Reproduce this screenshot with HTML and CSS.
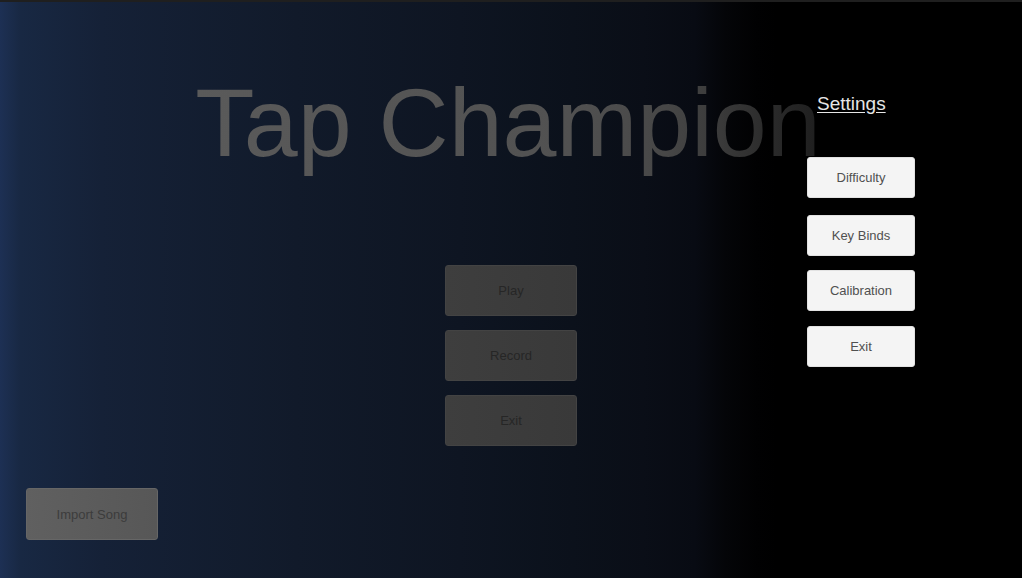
FILE: index.html
```html
<!DOCTYPE html>
<html lang="en">
<head>
<meta charset="utf-8">
<title>Tap Champion</title>
<link rel="stylesheet" href="styles.css">
</head>
<body>
<div class="screen">
  <header class="title-wrap">
    <h1 class="title">Tap Champion</h1>
  </header>
  <nav class="main-menu">
    <button class="btn btn-main">Play</button>
    <button class="btn btn-main">Record</button>
    <button class="btn btn-main">Exit</button>
  </nav>
  <div class="footer-row">
    <button class="btn btn-import">Import Song</button>
  </div>
  <aside class="settings">
    <div class="settings-title">Settings</div>
    <div class="settings-list">
      <button class="btn btn-light btn-difficulty">Difficulty</button>
      <button class="btn btn-light btn-keybinds">Key Binds</button>
      <button class="btn btn-light btn-calibration">Calibration</button>
      <button class="btn btn-light btn-exit">Exit</button>
    </div>
  </aside>
</div>
</body>
</html>
```
FILE: styles.css
```css
html, body {
  margin: 0;
  padding: 0;
  background: #000;
}
body {
  font-family: "Liberation Sans", Arial, sans-serif;
}
.screen {
  position: relative;
  width: 1022px;
  height: 578px;
  box-sizing: border-box;
  border-top: 2px solid #1f1f1f;
  overflow: hidden;
  display: flex;
  flex-direction: column;
  background: linear-gradient(to right,
    #1d3054 0%,
    #182843 2%,
    #152137 10%,
    #111a2a 29%,
    #0e1522 45%,
    #0b111b 56%,
    #0a0e17 63%,
    #080b13 68%,
    #040508 71%,
    #010102 74%,
    #000 76%,
    #000 100%);
}
.title-wrap {
  display: flex;
  justify-content: center;
  padding-top: 66px;
  padding-right: 6px;
}
.title {
  margin: 0;
  font-weight: normal;
  font-size: 97px;
  line-height: 110px;
  letter-spacing: 0;
  background: linear-gradient(to right,
    #5a5a5a 0%,
    #515151 60%,
    #474747 75%,
    #3a3a3a 84%,
    #2c2c2c 91%,
    #1e1e1e 100%);
  -webkit-background-clip: text;
  background-clip: text;
  color: transparent;
}
.btn {
  font-family: "Liberation Sans", Arial, sans-serif;
  font-size: 13px;
  border-radius: 3px;
  padding: 0;
  cursor: pointer;
}
.main-menu {
  margin-top: 87px;
  display: flex;
  flex-direction: column;
  align-items: center;
  gap: 14px;
}
.btn-main {
  width: 132px;
  height: 51px;
  background: linear-gradient(to right, #3e3e3e, #393939);
  border: 1px solid #434343;
  color: #262626;
}
.footer-row {
  margin-top: 42px;
  padding-left: 26px;
  display: flex;
}
.btn-import {
  width: 132px;
  height: 52px;
  background: linear-gradient(to right, #606060, #575757);
  border: 1px solid #666;
  color: #3c3c3c;
}
.settings {
  position: absolute;
  left: 807px;
  top: 91px;
  width: 108px;
  display: flex;
  flex-direction: column;
}
.settings-title {
  margin-left: 10px;
  font-size: 19px;
  line-height: 22px;
  color: #e6e6e6;
  text-decoration: underline;
  text-underline-offset: 2px;
}
.settings-list {
  margin-top: 42px;
  display: flex;
  flex-direction: column;
}
.btn-light {
  width: 108px;
  height: 41px;
  background: #f4f4f4;
  border: 1px solid #e2e2e2;
  color: #505050;
}
.btn-keybinds { margin-top: 17px; }
.btn-calibration { margin-top: 14px; }
.btn-exit { margin-top: 15px; }
```
